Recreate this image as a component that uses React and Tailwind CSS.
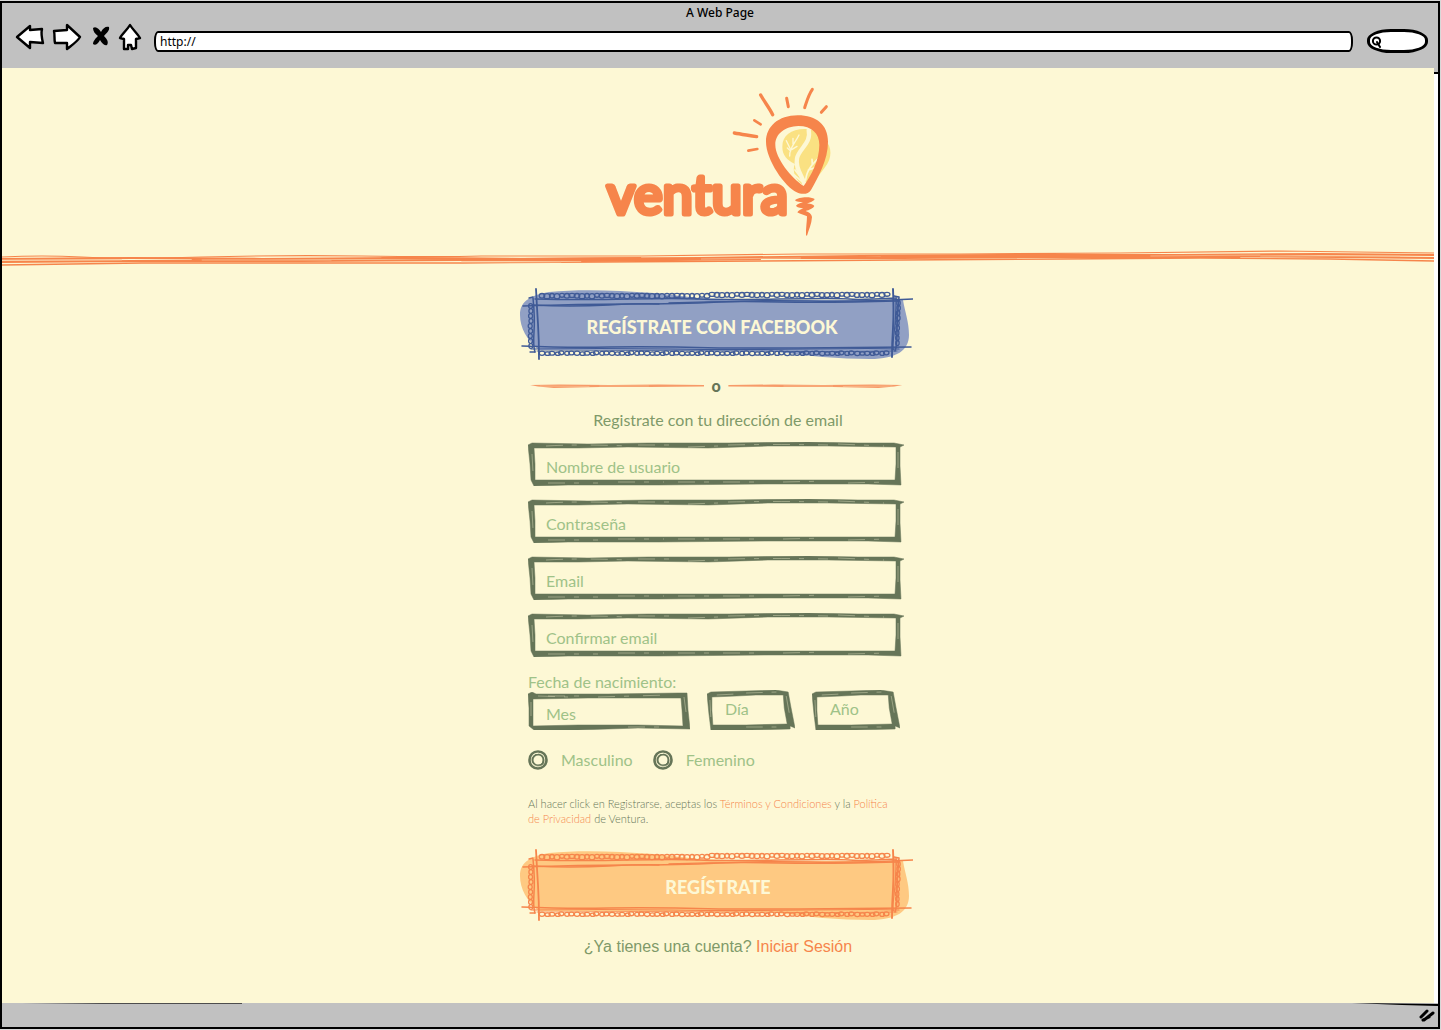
import React from "react";

const range = (from, to, step) => {
  const out = [];
  for (let v = from; v <= to; v += step) out.push(v);
  return out;
};

const wobble = (i) => Math.sin(i * 2.7) * 0.6 + Math.sin(i * 0.9) * 0.4;

/* Hand-drawn box with a scalloped edge, painted behind a button label. */
function LaceFrame({ fill, stroke }) {
  return (
    <svg
      viewBox="0 0 394 72"
      preserveAspectRatio="none"
      className="absolute inset-0 h-full w-full"
      fill="none"
      stroke={stroke}
      strokeLinecap="round"
      aria-hidden="true"
    >
      <path
        d="M1 27C1 15 8 8 30 4C60 1 95 2 135 5L180 10L240 12L384 12C386 24 390 34 390 47C390 62 378 71 351 71C320 71 290 68 250 63L20 62C8 52 1 40 1 27Z"
        fill={fill}
        stroke="none"
      />
      <g strokeWidth="1.3">
        {range(23, 372, 5).map((x, i) => (
          <ellipse
            key={"t" + x}
            cx={x}
            cy={(x < 190 ? 7.8 : 6.8) + wobble(i) * 0.6}
            rx={2.8 + wobble(i + 2) * 0.4}
            ry={2.3 + wobble(i) * 0.5}
          />
        ))}
        {range(23, 372, 5).map((x, i) => (
          <ellipse
            key={"b" + x}
            cx={x + wobble(i)}
            cy={65.3 + wobble(i) * 0.6}
            rx={2.6 + wobble(i + 1) * 0.3}
            ry={1.9 + wobble(i + 3) * 0.3}
          />
        ))}
        {range(18, 60, 5).map((y, i) => (
          <ellipse key={"l" + y} cx={11.6 + wobble(i) * 0.5} cy={y} rx="2" ry="2.4" />
        ))}
        {range(15, 58, 5).map((y, i) => (
          <ellipse key={"r" + y} cx={380 + wobble(i) * 0.5 - y / 30} cy={y} rx="1.7" ry="2.5" />
        ))}
      </g>
      <path d="M4 18Q60 16 110 16T200 14T290 13T394 11" strokeWidth="1.5" />
      <path d="M16 11Q60 12 110 11T180 11T260 11T330 11T378 10" strokeWidth="1.3" />
      <path d="M150 15Q210 13 260 14T378 13" strokeWidth="1.3" />
      <path d="M14 17Q50 19 90 17T140 16" strokeWidth="1.3" />
      <path d="M3 58Q50 60 90 59T200 60L280 60T392 59" strokeWidth="1.5" />
      <path d="M12 61Q80 60 150 61T290 61T380 61" strokeWidth="1.2" />
      <path d="M18 63Q120 62 220 63T378 63" strokeWidth="0.8" />
      <path d="M17 1Q18 20 19 36T20 71" strokeWidth="1.8" />
      <path d="M14 10Q16 30 15 44T16 64" strokeWidth="1.5" />
      <path d="M10 10L14 9M11 64L16 64" strokeWidth="1.3" />
      <path d="M374 1Q375 24 374 40T373 69" strokeWidth="1.9" />
      <path d="M375 8L380 9M380 9Q378 30 378 44T376 63" strokeWidth="1.6" />
      <path d="M377 10Q377 30 375 46T375 62" strokeWidth="1.2" />
    </svg>
  );
}

const INK = "#667558";
const PAPER = "#fdf8d5";

const FRAMES = {
  wide: {
    box: "0 0 376 44",
    ink: "M0 3L4 1L60 2L120 1L200 1L280 0L330 1L366 1L376 3L372 5L372 24L373 43L340 42L240 42L130 43L40 43L6 44L3 38L2 22ZM6 6L7 22L7 38L60 38L140 38L180 38L260 38L340 38L367 38L368 22L368 5L300 4L240 4L180 6L100 5L50 6Z",
    scratch:
      "M18 4Q50 2 100 4M110 3L150 3M160 5L190 4M200 3Q250 2 300 3M310 2L356 4M20 41L70 41M90 40L136 40M150 40L240 40M255 40L300 39M320 41L360 40M4 12L5 30M370 10L370 26",
  },
  month: {
    box: "0 0 162 38",
    ink: "M0 2L4 0L8 2L80 2L150 1L159 1L160 18L162 37L110 36L50 38L6 38L1 34L1 16ZM5 7L5 20L5 34L50 33L110 33L155 34L154 18L153 6L100 6L60 6Z",
    scratch: "M20 4L60 4M70 5L140 3M10 4L40 5M156 5L158 20M3 10L3 24M100 35L140 35",
  },
  day: {
    box: "0 0 90 40",
    ink: "M0 4L4 2L40 1L70 0L83 2L86 18L90 38L85 36L85 39L45 40L4 40L2 24ZM5 7L5 20L6 35L40 35L82 34L79 18L78 5L50 5L30 6Z",
    scratch: "M10 5L30 4M40 3L72 2M81 6L85 28M3 10L4 28M40 37L72 37",
  },
};

/* Rough marker outline that stretches with the field it surrounds. */
function InkFrame({ kind }) {
  const frame = FRAMES[kind];
  return (
    <svg
      viewBox={frame.box}
      preserveAspectRatio="none"
      className="pointer-events-none absolute inset-0 h-full w-full"
      aria-hidden="true"
    >
      <path d={frame.ink} fill={INK} fillRule="evenodd" stroke={INK} strokeWidth="0.5" strokeLinejoin="round" />
      <path d={frame.scratch} fill="none" stroke={PAPER} strokeWidth="0.6" strokeDasharray="17 9 5 14" opacity="0.6" />
    </svg>
  );
}

function Field({ label, kind = "wide", type = "text", className }) {
  return (
    <div className={"relative " + className}>
      <InkFrame kind={kind} />
      <input
        type={type}
        aria-label={label}
        placeholder={label}
        className="relative h-full w-full bg-transparent px-[18px] text-[#667558] outline-none placeholder:text-[#9fc288] placeholder:opacity-100"
      />
    </div>
  );
}

function Gender({ label }) {
  return (
    <label className="flex items-center gap-[13px]">
      <span className="relative block size-5">
        <input type="radio" name="genero" className="absolute inset-0 size-5 cursor-pointer appearance-none" />
        <svg viewBox="0 0 20 20" className="pointer-events-none relative size-5" fill="none" stroke={INK} aria-hidden="true">
          <path d="M10 1.500C15 1.500 18.500 5 18.500 10C18.500 15 14 18.500 10 18.500C5 18.500 1.500 15 1.500 10C1.500 5 5 1.500 10 1.500Z" strokeWidth="2.6" />
          <path d="M10 4.500C13 4 15.500 7 15.500 10C15.500 14 13 15.500 10 15.500C7 15.500 4.500 13 4.500 10C4.500 7 7 4.500 10 4.500Z" strokeWidth="2" />
          <path d="M5 5C8 2 13 3 15.500 6M4 13C7 17 12 17 15 15" stroke={PAPER} strokeWidth="0.5" />
        </svg>
      </span>
      <span>{label}</span>
    </label>
  );
}

function Logo() {
  return (
    <svg viewBox="0 0 232 152" className="h-[152px] w-[232px]" role="img" aria-label="ventura">
      <text
        x="5"
        y="128"
        fontFamily="Lato, sans-serif"
        fontWeight="400"
        fontSize="54"
        fill="#f6854b"
        stroke="#f6854b"
        strokeWidth="5"
        strokeLinejoin="round"
        strokeLinecap="round"
      >
        ventura
      </text>
      <g transform="translate(-7 -6) scale(0.33333)" fill="none" strokeLinecap="round" strokeLinejoin="round">
        <path d="M690 180C712 200 712 235 690 262C675 282 660 300 652 318L630 318C600 305 590 270 600 252C575 240 562 225 562 200C562 165 590 145 635 147C665 150 680 165 690 180Z" fill="#fae182" />
        <g stroke={PAPER}>
          <path d="M641 150C650 190 612 205 606 235C600 268 622 285 628 312" strokeWidth="13" />
          <path d="M584 228C582 205 600 190 612 165M585 205L574 182M587 213L577 204M594 192L594 175M590 209L606 199" strokeWidth="4" />
          <path d="M632 300C636 265 655 250 684 222M652 254L651 238M640 270L662 263M600 270L625 302M598 285L620 304" strokeWidth="5" />
        </g>
        <path
          d="M608 106C550 106 513 140 513 185C513 240 570 320 605 337C620 344 640 344 648 330C670 290 699 240 699 185C699 135 665 106 608 106ZM610 138C650 138 673 160 673 195C673 240 650 285 626 318C590 295 541 235 541 195C541 160 570 140 610 138Z"
          fill="#f6854b"
          fillRule="evenodd"
        />
        <g stroke="#f6854b" strokeWidth="9">
          <path d="M497 45C508 65 522 82 533 104" strokeWidth="10" />
          <path d="M575 55L580 80" />
          <path d="M652 28C640 45 635 65 629 83" />
          <path d="M694 80L679 97" />
          <path d="M478 121L497 133" strokeWidth="8" />
          <path d="M418 159C440 163 462 166 485 170" strokeWidth="10" />
          <path d="M460 212L487 207" strokeWidth="8" />
        </g>
        <path
          d="M600 361C610 351 645 349 659 357C657 363 645 368 634 371C645 370 655 373 658 378C655 385 643 390 632 393C642 396 650 402 651 411C650 432 641 450 636 467L633 466C632 445 636 425 636 409C628 404 612 402 607 397C610 391 620 388 625 385C616 384 605 382 603 377C607 371 617 369 624 366C615 366 604 366 600 361Z"
          fill="#f6854b"
        />
      </g>
    </svg>
  );
}

function SketchRule() {
  return (
    <svg viewBox="0 0 1434 16" preserveAspectRatio="none" className="h-4 w-full" fill="none" stroke="#f6854b" aria-hidden="true">
      <path d="M0 7Q40 5 80 7T200 7T360 6T480 6L640 6L800 4L960 4L1120 3L1280 1L1434 3" strokeWidth="1.2" />
      <path d="M0 9L130 8L260 9L400 8L520 9L700 8L860 6L1000 5L1180 5L1320 4L1434 5" strokeWidth="2.2" />
      <path d="M0 12L130 11L300 11L460 10L620 10L760 8L900 8L1060 7L1200 6L1340 7L1434 8" strokeWidth="1.8" />
      <path d="M0 15L140 13L300 13L460 13L600 12L760 11L900 10L1060 9L1200 8L1330 9L1434 11" strokeWidth="1.3" />
      <path d="M380 8L500 9L640 8M880 6L1040 6L1180 6M190 10L270 11M580 11L760 9M1000 7L1240 7" strokeWidth="2" />
      <path d="M0 10L120 10M200 10L330 10M460 12L560 12M700 9L800 8M1150 6L1260 5M1260 6L1400 6" stroke="#f9b383" strokeWidth="1" />
    </svg>
  );
}

function TaperRule({ flip }) {
  return (
    <svg
      viewBox="0 0 176 6"
      preserveAspectRatio="none"
      className={flip ? "h-1.5 flex-1 -scale-x-100" : "h-1.5 flex-1"}
      aria-hidden="true"
    >
      <path d="M0 2L30 1.500L80 2L130 1.500L176 2L176 3.500L120 4L70 4L24 5L8 3.500Z" fill="#f79a68" />
      <path d="M10 3L60 3.500M70 3L120 3" stroke="#fbd0a4" strokeWidth="0.5" fill="none" />
    </svg>
  );
}

function BrowserBar() {
  return (
    <header className="bg-[#c1c1c1] pb-[15px]">
      <h1 className="pt-0.5 text-center font-['Noto_Sans',sans-serif] text-xs leading-4 font-medium text-black">A Web Page</h1>
      <div className="flex items-center pr-[10px] pl-[13px]">
        <nav className="flex items-center" aria-label="Navegador">
          <button type="button" aria-label="Atrás">
            <svg width="30" height="28" viewBox="0 0 30 28" fill="#fff" stroke="#000" strokeWidth="2.4" strokeLinejoin="round">
              <path d="M2 14L15 3L15 7L27 6C26 10 27 16 28 20L15 19L15 25Z" />
            </svg>
          </button>
          <button type="button" aria-label="Adelante" className="ml-[7px]">
            <svg width="30" height="28" viewBox="0 0 30 28" fill="#fff" stroke="#000" strokeWidth="2.4" strokeLinejoin="round">
              <path d="M28 14L15 2L15 7L2 8C3 12 2 16 3 20L15 20L15 26C20 22 25 19 28 14Z" />
            </svg>
          </button>
          <button type="button" aria-label="Detener" className="ml-[10px]">
            <svg width="18" height="24" viewBox="0 0 18 24" fill="#000">
              <path d="M1 3C4 1 7 4 9 7C11 3 14 1 17 2C18 6 14 8 12 11C15 14 17 17 15 20C12 21 10 18 8 15C6 19 3 21 1 19C1 16 4 13 6 11C3 9 1 6 1 3Z" />
            </svg>
          </button>
          <button type="button" aria-label="Inicio" className="ml-2">
            <svg width="24" height="28" viewBox="0 0 24 28" fill="#fff" stroke="#000" strokeWidth="2.4" strokeLinejoin="round">
              <path d="M12 2C9 7 4 11 2 15L6 16L6 26L10 26L10 22L13 22L14 26L18 25L18 16L22 15C19 10 15 7 12 2Z" />
            </svg>
          </button>
        </nav>
        <input
          type="text"
          aria-label="Dirección"
          defaultValue="http://"
          className="mt-2 ml-3 h-[21px] min-w-0 flex-1 rounded-[4px/9px] border-2 border-black bg-white pl-1 font-['Noto_Sans',sans-serif] text-xs text-black outline-none"
        />
        <label className="relative mt-2 ml-[14px] block">
          <input
            type="search"
            aria-label="Buscar"
            className="block h-6 w-[61px] rounded-[24px/11px] border-[3px] border-black bg-white pr-1 pl-4 text-xs outline-none"
          />
          <svg viewBox="0 0 12 12" className="absolute top-[7px] left-1 size-3" fill="none" stroke="#000" strokeWidth="2" strokeLinecap="round" aria-hidden="true">
            <circle cx="5.5" cy="5" r="3.6" />
            <path d="M6 6L9 11" />
          </svg>
        </label>
      </div>
    </header>
  );
}

export default function App() {
  return (
    <div className="flex min-h-screen flex-col bg-[#d8d8d8] pt-px pr-px pb-px font-[Lato,sans-serif]">
      <div className="flex flex-1 flex-col border-2 border-black">
        <BrowserBar />
        <div className="flex flex-1">
          <main className="flex flex-1 flex-col items-center bg-[#fdf8d5] pt-[18px]">
            <Logo />
            <div className="mt-3 w-full">
              <SketchRule />
            </div>
            <form className="mt-[22px] mr-1 w-full max-w-[376px] text-base" onSubmit={(e) => e.preventDefault()}>
              <button type="button" className="relative -mx-[9px] flex h-[72px] w-[calc(100%+18px)] items-center justify-center pt-1.5 pr-2">
                <LaceFrame fill="#91a0c4" stroke="#3f5a96" />
                <span className="relative text-lg font-black text-[#fdf8d5]">REGÍSTRATE CON FACEBOOK</span>
              </button>

              <div className="mt-3.5 flex h-6 items-center gap-[7px] px-0.5">
                <TaperRule />
                <span className="leading-6 font-black text-[#667558]">o</span>
                <TaperRule flip />
              </div>

              <p className="mt-2.5 pl-1 text-center leading-6 text-[#7f9a69]">Registrate con tu dirección de email</p>

              <div className="mt-2.5 flex flex-col gap-[13px]">
                <Field label="Nombre de usuario" className="h-11 pt-1" />
                <Field label="Contraseña" type="password" className="h-11 pt-1" />
                <Field label="Email" type="email" className="h-11 pt-1" />
                <Field label="Confirmar email" type="email" className="h-11 pt-1" />
              </div>

              <fieldset className="mt-[13px]">
                <legend className="leading-6 text-[#9fc288]">Fecha de nacimiento:</legend>
                <div className="-mt-1 flex items-end gap-[17px]">
                  <Field label="Mes" kind="month" className="h-[38px] w-[162px] pt-1" />
                  <Field label="Día" kind="day" className="h-10 w-[88px] pb-1" />
                  <Field label="Año" kind="day" className="h-10 w-[88px] pb-1" />
                </div>
              </fieldset>

              <div className="mt-[18px] flex gap-5 leading-6 text-[#9fc288]">
                <Gender label="Masculino" />
                <Gender label="Femenino" />
              </div>

              <p className="mt-6 pr-1 text-[11px] leading-[15px] font-light text-[#667558]">
                Al hacer click en Registrarse, aceptas los{" "}
                <a href="#terminos" className="text-[#f6854b]">Términos y Condiciones</a> y la{" "}
                <a href="#privacidad" className="text-[#f6854b]">Política de Privacidad</a> de Ventura.
              </p>

              <button type="submit" className="relative -mx-[9px] mt-[23px] flex h-[72px] w-[calc(100%+18px)] items-center justify-center pt-1 pl-1">
                <LaceFrame fill="#fec982" stroke="#f6854b" />
                <span className="relative text-lg font-black text-[#fdf8d5]">REGÍSTRATE</span>
              </button>

              <p className="mt-3.5 pl-1 text-center font-['Liberation_Sans',sans-serif] leading-6 text-[#7f9a69]">
                ¿Ya tienes una cuenta?{" "}
                <a href="#iniciar" className="text-[#f6854b]">Iniciar Sesión</a>
              </p>
            </form>
          </main>
          <div className="w-1 bg-white">
            <div className="h-1.5 border-b-2 border-black bg-[#c1c1c1]" />
          </div>
        </div>
        <footer className="flex h-6 flex-col items-end bg-[#c1c1c1]">
          <svg viewBox="0 0 1436 4" preserveAspectRatio="none" className="h-1 w-full" aria-hidden="true">
            <path d="M1350 0L1436 1L1436 3L1400 2Z" />
            <path d="M20 0L240 0L240 1L100 1Z" opacity="0.6" />
          </svg>
          <svg viewBox="0 0 18 16" className="mr-0.5 h-4 w-[18px]" stroke="#000" strokeLinecap="round" strokeWidth="3" aria-hidden="true">
            <path d="M3 10L9 4M6 13L15 6M5 13L11 10" />
          </svg>
        </footer>
      </div>
    </div>
  );
}
